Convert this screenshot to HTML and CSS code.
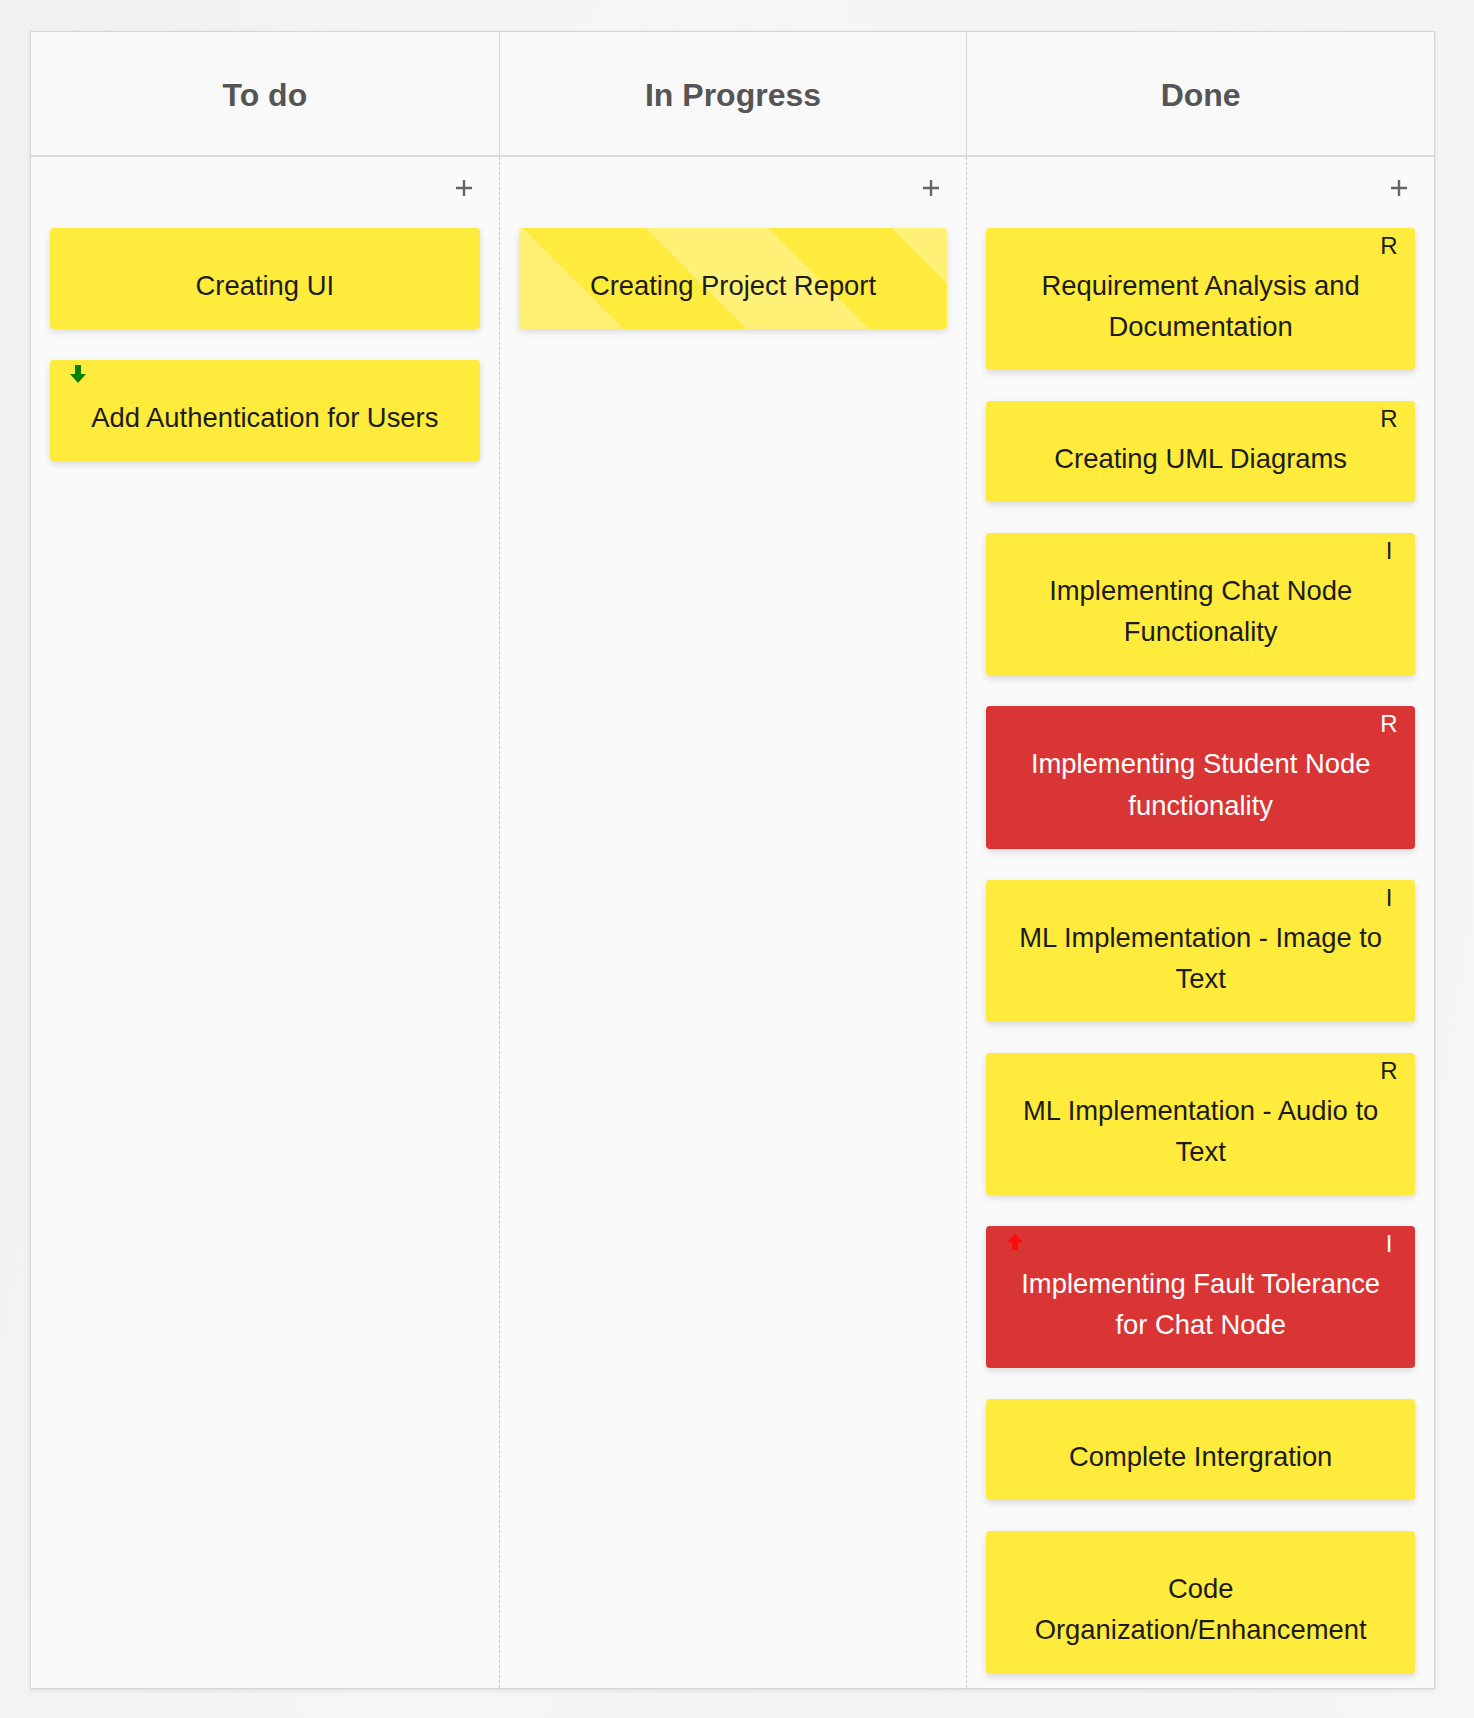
FILE: index.html
```html
<!DOCTYPE html>
<html lang="en">
<head>
<meta charset="utf-8">
<title>Board</title>
<link rel="stylesheet" href="styles.css">
</head>
<body>
<div class="board">
  <div class="board-head">
    <div class="head-cell">To do</div>
    <div class="head-cell">In Progress</div>
    <div class="head-cell">Done</div>
  </div>
  <div class="board-body">
    <div class="col">
      <div class="add-row"><svg class="plus" viewBox="0 0 18 18"><path d="M9 1v16M1 9h16"/></svg></div>
      <div class="card yellow"><div class="card-text">Creating UI</div></div>
      <div class="card yellow">
        <svg class="prio" viewBox="0 0 16 18"><polygon class="down" points="5,0 11,0 11,9 16,9 8,18 0,9 5,9"/></svg>
        <div class="card-text">Add Authentication for Users</div>
      </div>
    </div>
    <div class="col">
      <div class="add-row"><svg class="plus" viewBox="0 0 18 18"><path d="M9 1v16M1 9h16"/></svg></div>
      <div class="card striped"><div class="card-text">Creating Project Report</div></div>
    </div>
    <div class="col">
      <div class="add-row"><svg class="plus" viewBox="0 0 18 18"><path d="M9 1v16M1 9h16"/></svg></div>
      <div class="card yellow"><span class="badge">R</span><div class="card-text">Requirement Analysis and Documentation</div></div>
      <div class="card yellow"><span class="badge">R</span><div class="card-text">Creating UML Diagrams</div></div>
      <div class="card yellow"><span class="badge">I</span><div class="card-text">Implementing Chat Node Functionality</div></div>
      <div class="card red"><span class="badge">R</span><div class="card-text">Implementing Student Node functionality</div></div>
      <div class="card yellow"><span class="badge">I</span><div class="card-text">ML Implementation - Image to Text</div></div>
      <div class="card yellow"><span class="badge">R</span><div class="card-text">ML Implementation - Audio to Text</div></div>
      <div class="card red">
        <svg class="prio prio-up" viewBox="0 0 16 16"><polygon class="up" points="8,0 16,8.5 11,8.5 11,16 5,16 5,8.5 0,8.5"/></svg>
        <span class="badge">I</span><div class="card-text">Implementing Fault Tolerance for Chat Node</div>
      </div>
      <div class="card yellow"><div class="card-text">Complete Intergration</div></div>
      <div class="card yellow"><div class="card-text">Code Organization/Enhancement</div></div>
    </div>
  </div>
</div>
</body>
</html>
```
FILE: styles.css
```css
html, body {
  margin: 0;
  padding: 0;
}
body {
  background: linear-gradient(100deg, #f1f1f1 0%, #f6f6f7 40%, #f3f3f4 70%, #f6f6f6 100%);
  font-family: "Liberation Sans", Arial, sans-serif;
  padding: 31px 39px 29px 30px;
  min-height: 1718px;
  box-sizing: border-box;
}
.board {
  border: 1px solid #d6d6d6;
  background: #fafafa;
  box-shadow: 0 2px 5px rgba(0,0,0,0.08), 0 0 1px rgba(0,0,0,0.1);
}
.board-head {
  display: grid;
  grid-template-columns: 1fr 1fr 1fr;
  border-bottom: 2px solid #dcdcdc;
  background: #f9f9f9;
}
.head-cell {
  height: 123px;
  box-sizing: border-box;
  padding-top: 4px;
  display: flex;
  align-items: center;
  justify-content: center;
  font-weight: bold;
  font-size: 32px;
  color: #555;
}
.head-cell + .head-cell {
  border-left: 1px solid #d9d9d9;
}
.board-body {
  display: grid;
  grid-template-columns: 1fr 1fr 1fr;
}
.col {
  padding: 13px 19px 14px 19px;
  display: flex;
  flex-direction: column;
}
.col + .col {
  border-left: 1px dashed #c8c8c8;
}
.add-row {
  height: 36px;
  display: flex;
  align-items: center;
  justify-content: flex-end;
  padding-right: 7px;
  margin-bottom: 22px;
}
.plus {
  width: 18px;
  height: 18px;
  stroke: #666;
  stroke-width: 2.4;
  fill: none;
}
.card {
  position: relative;
  border-radius: 4px;
  box-shadow: 0 3px 7px rgba(0,0,0,0.13);
  margin-bottom: 30.8px;
  padding: 37px 20px 23px;
  text-align: center;
  font-size: 27.4px;
  line-height: 41.2px;
  color: #1c1c1c;
}
.card:last-child {
  margin-bottom: 0;
}
.yellow {
  background: #ffeb3b;
}
.striped {
  background: repeating-linear-gradient(45deg, #fff176 0, #fff176 74px, #ffeb3b 74px, #ffeb3b 161px, #fff176 161px, #fff176 174px);
}
.red {
  background: #da3535;
  color: #fff;
}
.badge {
  position: absolute;
  top: 4px;
  right: 11px;
  width: 30px;
  text-align: center;
  font-size: 24px;
  line-height: 28px;
}
.prio {
  position: absolute;
  left: 20px;
  top: 5px;
  width: 16px;
  height: 18px;
}
.prio-up {
  left: 21px;
  top: 8px;
  height: 16px;
}
.down {
  fill: #078207;
}
.up {
  fill: #ff0a0a;
}
```
